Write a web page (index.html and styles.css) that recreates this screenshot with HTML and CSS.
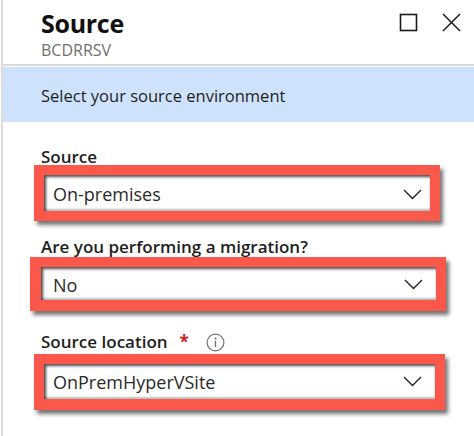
FILE: index.html
```html
<!DOCTYPE html>
<html lang="en">
<head>
<meta charset="utf-8">
<title>Source</title>
<link rel="stylesheet" href="styles.css">
</head>
<body>
<div class="blade">
  <header class="head">
    <div class="titles">
      <h1 class="title">Source</h1>
      <div class="subtitle">BCDRRSV</div>
    </div>
    <div class="actions">
      <svg class="icon-max" width="19" height="19" viewBox="0 0 19 19"><rect x="1.5" y="1.5" width="16" height="16" fill="none" stroke="#1a1a1a" stroke-width="1.6"/></svg>
      <svg class="icon-close" width="19" height="19" viewBox="0 0 19 19"><path d="M1 1 L18 18 M18 1 L1 18" stroke="#1a1a1a" stroke-width="1.5" fill="none"/></svg>
    </div>
  </header>
  <div class="band">Select your source environment</div>
  <div class="form">
    <div class="field">
      <div class="label">Source</div>
      <div class="hl hl-1">
        <div class="select sel-1">
          <span class="value">On-premises</span>
          <svg class="chev" width="19" height="11" viewBox="0 0 19 11"><path d="M1 1 L9.5 9.5 L18 1" fill="none" stroke="#222" stroke-width="1.4"/></svg>
        </div>
      </div>
    </div>
    <div class="field f-2">
      <div class="label">Are you performing a migration?</div>
      <div class="hl hl-2">
        <div class="select sel-2">
          <span class="value">No</span>
          <svg class="chev" width="19" height="11" viewBox="0 0 19 11"><path d="M1 1 L9.5 9.5 L18 1" fill="none" stroke="#222" stroke-width="1.4"/></svg>
        </div>
      </div>
    </div>
    <div class="field f-3">
      <div class="label">Source location <span class="req">*</span>
        <svg class="info" width="19" height="19" viewBox="0 0 19 19"><circle cx="9.5" cy="9.5" r="8.4" fill="none" stroke="#707070" stroke-width="1.2"/><circle cx="9.5" cy="5.4" r="1" fill="#707070"/><path d="M9.5 7.8 V14" stroke="#707070" stroke-width="1.3"/></svg>
      </div>
      <div class="hl hl-3">
        <div class="select sel-3">
          <span class="value">OnPremHyperVSite</span>
          <svg class="chev" width="19" height="11" viewBox="0 0 19 11"><path d="M1 1 L9.5 9.5 L18 1" fill="none" stroke="#222" stroke-width="1.4"/></svg>
        </div>
      </div>
    </div>
  </div>
</div>
</body>
</html>
```

FILE: styles.css
```css
html, body {
  margin: 0;
  padding: 0;
  background: #fff;
}
body {
  width: 474px;
  height: 436px;
  overflow: hidden;
  font-family: "Open Sans", "Noto Sans", sans-serif;
  color: #1e1e1e;
}
.blade {
  margin-left: 1px;
  border-left: 2px solid #dcdcdc;
  height: 436px;
}
.head {
  height: 66px;
  box-sizing: border-box;
  padding-top: 10px;
  border-bottom: 2px solid #d9d9d9;
  display: flex;
  justify-content: space-between;
  align-items: flex-start;
  padding-left: 38px;
  padding-right: 13px;
}
.title {
  margin: 0;
  font-size: 25px;
  line-height: 27px;
  font-weight: 700;
  color: #111;
  letter-spacing: -0.3px;
}
.subtitle {
  font-size: 16px;
  line-height: 17px;
  color: #707070;
  margin-top: 5px;
}
.actions {
  display: flex;
  gap: 24px;
  margin-top: 3px;
}
.band {
  margin-top: 1px;
  height: 55px;
  background: #cfe2fb;
  padding-left: 38px;
  box-sizing: border-box;
  font-size: 16.5px;
  line-height: 57px;
  color: #1e1e1e;
  overflow: hidden;
}
.form {
  padding-left: 38px;
  padding-top: 27px;
}
.label {
  font-size: 17px;
  line-height: 16px;
  font-weight: 600;
  color: #1e1e1e;
  display: flex;
  align-items: center;
  white-space: nowrap;
}
.req {
  color: #c8201a;
  margin-left: 12px;
  font-weight: 700;
}
.info {
  margin-left: 17px;
  margin-top: 2px;
}
.f-2 { margin-top: 18px; }
.f-3 { margin-top: 20px; }
.hl {
  border: 10px solid #f9584b;
  box-shadow: 3px 4px 4px rgba(0, 0, 0, 0.55);
}
.hl-1 { margin-left: -7px; width: 386px; }
.hl-2 { margin-left: -11px; width: 395px; margin-top: 2px; border-left-width: 11px; border-bottom-width: 11px; }
.hl-3 { margin-left: -7px; width: 391px; margin-top: 2px; border-bottom-width: 11px; }
.select {
  background: #fff;
  display: flex;
  align-items: center;
  justify-content: space-between;
  box-shadow: inset 2px 2px 3px rgba(0, 0, 0, 0.7), inset 0 -2px 2px rgba(0, 0, 0, 0.25);
  font-size: 18px;
  color: #2a2a2a;
  box-sizing: border-box;
}
.sel-1 { height: 36px; padding: 2px 8px 0 9px; }
.sel-2 { height: 33px; padding: 2px 13px 0 12px; }
.sel-3 { height: 35px; padding: 0 13px 0 9px; }
.chev { display: block; }
```
